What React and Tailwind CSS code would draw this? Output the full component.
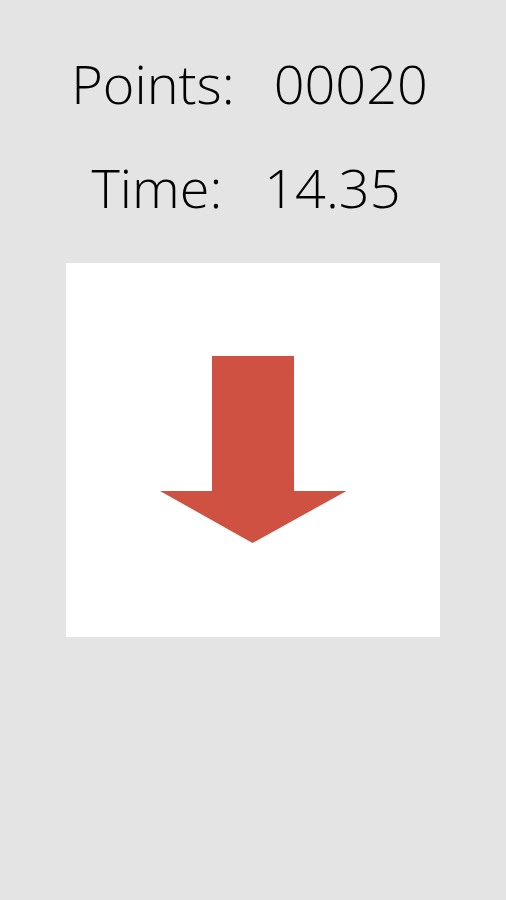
export default function App() {
  return (
    <div className="min-h-[900px] w-full bg-[#e4e4e4] flex flex-col items-center pt-[55px] gap-12" style={{ fontFamily: '"Open Sans", sans-serif' }}>
      <div className="flex gap-[39px] text-[54px] leading-[56px] font-light text-black mr-[7px]">
        <span>Points:</span>
        <span>00020</span>
      </div>
      <div className="flex gap-[42px] text-[54px] leading-[56px] font-light text-black mr-[14px]">
        <span>Time:</span>
        <span>14.35</span>
      </div>
      <div className="w-[374px] h-[374px] bg-white relative">
        <svg className="absolute left-0 top-0" width="374" height="374" viewBox="0 0 374 374">
          <polygon points="146,93 228,93 228,228 280.5,228 186.5,280 94,228 146,228" fill="#cf5142" />
        </svg>
      </div>
    </div>
  );
}
